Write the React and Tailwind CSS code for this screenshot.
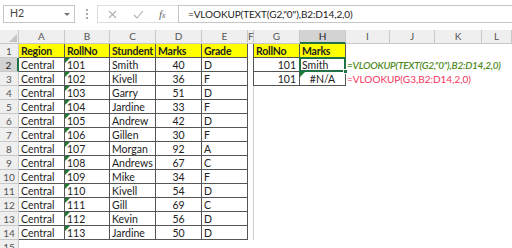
import React from 'react'

const font = { fontFamily: 'Lato, "Open Sans", sans-serif' }

const cols = ['A', 'B', 'C', 'D', 'E', 'F', 'G', 'H', 'I', 'J', 'K', 'L']

const data = [
	['Central', '101', 'Smith', 40, 'D'],
	['Central', '102', 'Kivell', 36, 'F'],
	['Central', '103', 'Garry', 51, 'D'],
	['Central', '104', 'Jardine', 33, 'F'],
	['Central', '105', 'Andrew', 42, 'D'],
	['Central', '106', 'Gillen', 30, 'F'],
	['Central', '107', 'Morgan', 92, 'A'],
	['Central', '108', 'Andrews', 67, 'C'],
	['Central', '109', 'Mike', 34, 'F'],
	['Central', '110', 'Kivell', 54, 'D'],
	['Central', '111', 'Gill', 69, 'C'],
	['Central', '112', 'Kevin', 56, 'D'],
	['Central', '113', 'Jardine', 50, 'D'],
]

function Tri() {
	return (
		<span className="absolute left-0 top-0 h-0 w-0 border-t-[5px] border-r-[5px] border-t-[#1e7b34] border-r-transparent" />
	)
}

function FormulaBar() {
	return (
		<div className="flex h-[30px] items-start bg-white pt-[5px] text-[11px] text-[#444]">
			<div className="ml-[3px] flex h-[18px] w-[72px] items-center justify-between border border-[#c6c6c6] pl-[6px] pr-[4px]">
				<span className="text-[10.5px]">H2</span>
				<span className="h-0 w-0 border-x-[3px] border-t-[3px] border-x-transparent border-t-[#777]" />
			</div>
			<div className="ml-[10px] flex h-[18px] w-[4px] flex-col items-center justify-center gap-[2px]">
				<span className="h-[2px] w-[2px] bg-[#aaa]" />
				<span className="h-[2px] w-[2px] bg-[#aaa]" />
				<span className="h-[2px] w-[2px] bg-[#aaa]" />
			</div>
			<div className="ml-[8px] flex h-[18px] w-[81px] items-center border border-r-0 border-[#dcdcdc] text-[#b5b5b5]">
				<svg className="ml-[10px]" width="9" height="9" viewBox="0 0 9 9">
					<path d="M1 1L8 8M8 1L1 8" stroke="#b0b0b0" strokeWidth="1.1" />
				</svg>
				<svg className="ml-[16px]" width="11" height="9" viewBox="0 0 11 9">
					<path d="M1 5L4 8L10 1" stroke="#b0b0b0" strokeWidth="1.1" fill="none" />
				</svg>
				<span className="ml-[15px] text-[11px] italic text-[#666]" style={{ fontFamily: '"Liberation Serif", serif' }}>
					f<span className="text-[8px]">x</span>
				</span>
			</div>
			<div className="flex h-[18px] flex-1 items-center border border-r-0 border-[#c6c6c6] pl-[9px] text-[10px] tracking-[-0.1px] text-[#222]">
				=VLOOKUP(TEXT(G2,"0"),B2:D14,2,0)
			</div>
		</div>
	)
}

export default function App() {
	const cell = 'relative h-[14px] leading-[14px] whitespace-nowrap overflow-hidden'
	const tb = 'border-r border-b border-[#555]'
	const rowNums = Array.from({ length: 15 }, (_, i) => i + 1)

	return (
		<div className="h-[248px] w-[512px] overflow-hidden bg-white text-[10.5px] text-[#222]" style={font}>
			<FormulaBar />
			<div className="grid grid-cols-[19px_46px_45px_46px_46px_46px_6px_46px_46px_44px_45px_47px_1fr]">
				{/* column headers */}
				<div className="relative h-[14px] border-r border-b border-[#c8c8c8] bg-[#efefef]">
					<span className="absolute bottom-[1px] right-[1px] h-0 w-0 border-b-[8px] border-l-[8px] border-b-[#c4c4c4] border-l-transparent" />
				</div>
				{cols.map((c) =>
					c === 'H' ? (
						<div key={c} className="h-[14px] border-r border-b-2 border-r-[#c8c8c8] border-b-[#217346] bg-[#d3d3d3] text-center text-[10px] leading-[13px] text-[#222]">
							{c}
						</div>
					) : (
						<div key={c} className="h-[14px] border-r border-b border-[#c8c8c8] bg-[#efefef] text-center text-[10px] leading-[13px] text-[#555]">
							{c}
						</div>
					)
				)}

				{rowNums.map((r) => {
					const d = r >= 2 && r <= 14 ? data[r - 2] : null
					return (
						<React.Fragment key={r}>
							<div
								className={
									r === 2
										? 'h-[14px] border-r-2 border-b border-r-[#217346] border-b-[#c8c8c8] bg-[#d3d3d3] text-center text-[10px] leading-[14px] text-[#222]'
										: 'h-[14px] border-r border-b border-[#c8c8c8] bg-[#efefef] text-center text-[10px] leading-[14px] text-[#555]'
								}
							>
								{r}
							</div>
							{/* A-E */}
							{r === 1 ? (
								['Region', 'RollNo', 'Stundent', 'Marks', 'Grade'].map((h) => (
									<div key={h} className={`${cell} ${tb} bg-[#ffff00] pl-[2px] font-bold tracking-[-0.2px]`}>
										{h}
									</div>
								))
							) : d ? (
								<>
									<div className={`${cell} ${tb} pl-[2px]`}>{d[0]}</div>
									<div className={`${cell} ${tb} pl-[2px]`}>
										<Tri />
										{d[1]}
									</div>
									<div className={`${cell} ${tb} pl-[2px]`}>{d[2]}</div>
									<div className={`${cell} ${tb} text-center`}>{d[3]}</div>
									<div className={`${cell} ${tb} pl-[2px]`}>{d[4]}</div>
								</>
							) : (
								<>
									<div className={cell} />
									<div className={cell} />
									<div className={cell} />
									<div className={cell} />
									<div className={cell} />
								</>
							)}
							{/* F */}
							<div className={r <= 3 ? `${cell} border-r border-[#555]` : r <= 14 ? `${cell} border-r border-[#d0d0d0]` : cell} />
							{/* G-H */}
							{r === 1 ? (
								<>
									<div className={`${cell} ${tb} bg-[#ffff00] pl-[2px] font-bold tracking-[-0.2px]`}>RollNo</div>
									<div className={`${cell} ${tb} bg-[#ffff00] pl-[2px] font-bold tracking-[-0.2px]`}>Marks</div>
								</>
							) : r === 2 ? (
								<>
									<div className={`${cell} ${tb} pr-[3px] text-right`}>101</div>
									<div className={`relative h-[14px] leading-[14px] ${tb} pl-[2px]`}>
										Smith
										<span className="absolute -left-[1px] -top-[1px] bottom-[-1px] right-[-1px] border-2 border-[#217346]" />
										<span className="absolute -bottom-[3px] -right-[3px] z-10 h-[5px] w-[5px] border border-white bg-[#217346]" />
									</div>
								</>
							) : r === 3 ? (
								<>
									<div className={`${cell} ${tb} pr-[3px] text-right`}>101</div>
									<div className={`${cell} ${tb} text-center`}>
										<Tri />
										#N/A
									</div>
								</>
							) : (
								<>
									<div className={cell} />
									<div className={cell} />
								</>
							)}
							{/* I-L */}
							<div className="relative z-20 h-[14px] overflow-visible whitespace-nowrap pl-[1px] leading-[14px]">
								{r === 2 && (
									<span className="text-[10px] font-semibold italic tracking-[-0.25px] text-[#4f8a1e]">
										=VLOOKUP(TEXT(G2,"0"),B2:D14,2,0)
									</span>
								)}
								{r === 3 && <span className="text-[10px] text-[#f5345a]">=VLOOKUP(G3,B2:D14,2,0)</span>}
							</div>
							<div className={cell} />
							<div className={cell} />
							<div className={cell} />
						</React.Fragment>
					)
				})}
			</div>
		</div>
	)
}
